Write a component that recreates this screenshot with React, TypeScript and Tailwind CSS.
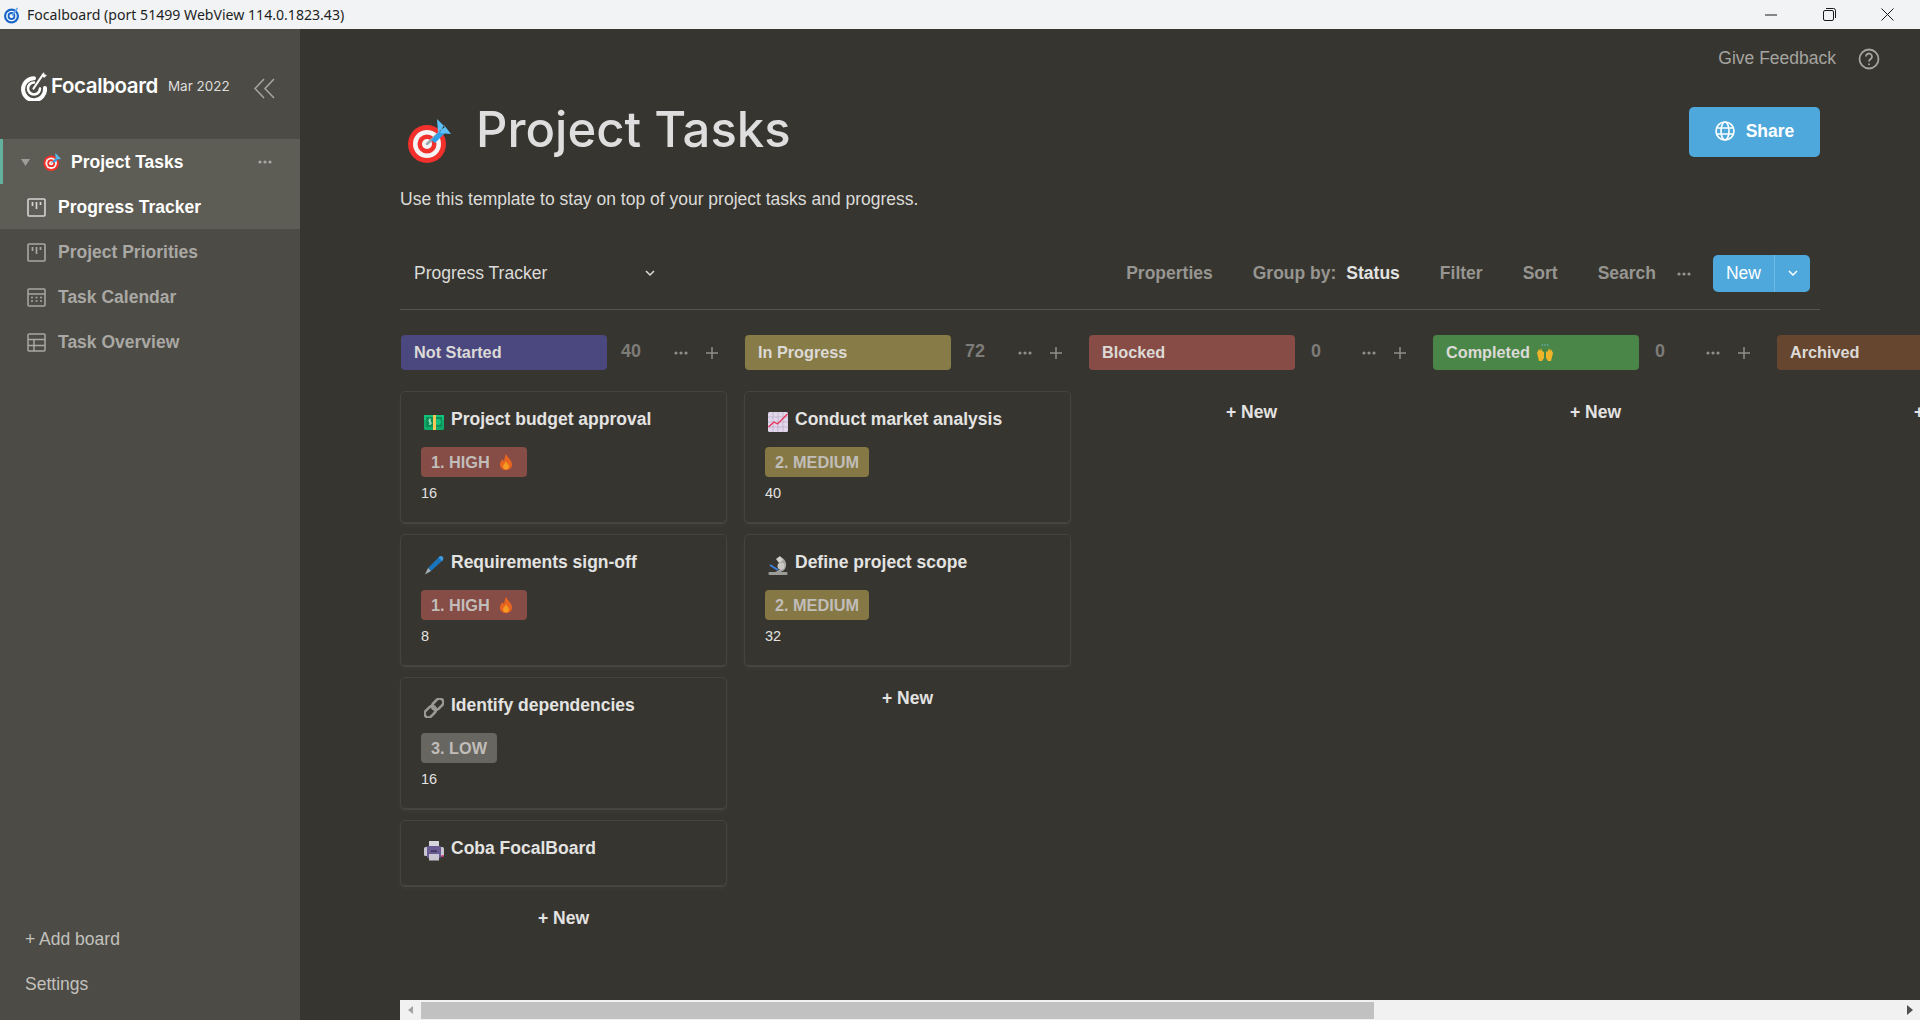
import React from 'react';

const sans = "font-['Liberation_Sans',Arial,sans-serif]";

function DartEmoji({ size = 44 }: { size?: number }) {
  return (
    <svg width={size} height={size} viewBox="0 0 44 44" className="shrink-0">
      <circle cx="20" cy="25" r="19" fill="#f2312c" />
      <circle cx="20" cy="25" r="14" fill="#f4f4f4" />
      <circle cx="20" cy="25" r="9.5" fill="#f2312c" />
      <circle cx="20" cy="25" r="5" fill="#f4f4f4" />
      <path d="M20 25 L33 13" stroke="#9aa5ad" strokeWidth="2.5" strokeLinecap="round" />
      <path d="M24 21 L35 10 L38 14 L28 24 Z" fill="#2f9fe8" />
      <path d="M31 13 L30 0 L38 8 Z M33 14 L44 15 L37 6 Z" fill="#5cc0f7" />
    </svg>
  );
}

function MoneyEmoji() {
  return (
    <svg width="20" height="20" viewBox="0 0 20 20" className="shrink-0">
      <rect x="0" y="3" width="20" height="15" rx="1.5" fill="#0fa968" />
      <rect x="0" y="3" width="20" height="5" fill="#13c27a" />
      <rect x="2" y="5" width="16" height="10" fill="#0b8f58" />
      <circle cx="14" cy="10" r="3" fill="#13c27a" />
      <path d="M6 7.5 C4.5 7.5 4.5 9.8 6 9.8 C7.5 9.8 7.5 12.5 5.5 12.2 M6 6.5 V13" stroke="#b8f5d4" strokeWidth="1" fill="none" />
      <rect x="9" y="3" width="3" height="15" fill="#f5c65a" />
    </svg>
  );
}

function PenEmoji() {
  return (
    <svg width="20" height="20" viewBox="0 0 20 20" className="shrink-0">
      <path d="M4 13 L15 2 Q17 1 18.5 2.5 Q20 4 18 6 L7 16 Z" fill="#1b75bb" />
      <path d="M14.5 2.5 L18 6 L19 5 Q20 3 18.5 1.5 Q17 0.5 15.5 1.5 Z" fill="#3f9be0" />
      <path d="M4 13 L7 16 L1 19.5 Z" fill="#a8b0b5" />
    </svg>
  );
}

function LinkEmoji() {
  return (
    <svg width="20" height="20" viewBox="0 0 20 20" fill="none" className="shrink-0" stroke="#9b9a96" strokeWidth="2.6">
      <rect x="-6.5" y="-3.8" width="13" height="7.6" rx="3.8" transform="translate(6.3 13.7) rotate(-45)" />
      <rect x="-6.5" y="-3.8" width="13" height="7.6" rx="3.8" transform="translate(13.7 6.3) rotate(-45)" />
    </svg>
  );
}

function PrinterEmoji() {
  return (
    <svg width="20" height="20" viewBox="0 0 20 20" className="shrink-0">
      <rect x="5" y="0" width="10" height="6" fill="#d5d3dc" />
      <rect x="0" y="6" width="20" height="9" rx="1.5" fill="#c8c6d0" />
      <rect x="3" y="5" width="14" height="12" rx="1" fill="#6b5b95" />
      <rect x="7" y="9.5" width="6" height="1.2" fill="#2e2845" />
      <rect x="5" y="13" width="10" height="6.5" fill="#c9c7d2" />
      <rect x="17.5" y="14" width="2" height="2" fill="#e83e8c" />
    </svg>
  );
}

function ChartEmoji() {
  return (
    <svg width="20" height="20" viewBox="0 0 20 20" className="shrink-0">
      <rect x="0" y="0" width="20" height="20" rx="1.5" fill="#e2d7ea" />
      <path d="M5 0V20M10 0V20M15 0V20M0 5H20M0 10H20M0 15H20" stroke="#b9a9c6" strokeWidth="0.7" />
      <path d="M0.5 15 L6 10 L9.5 12 L19.5 2" stroke="#e8335a" strokeWidth="1.4" fill="none" />
    </svg>
  );
}

function MicroscopeEmoji() {
  return (
    <svg width="20" height="20" viewBox="0 0 20 20" className="shrink-0">
      <rect x="0.5" y="17" width="19" height="3" rx="1" fill="#9c9b97" />
      <path d="M12 2 C17 3 20 9 17 14 Q15 17 12 17 L7 17 Q13 15 13.5 11 Q13.5 8 11 7 Z" fill="#a5a4a0" />
      <path d="M8 4 L12 1 L15 5 L11 8 Z" fill="#d3d2ce" />
      <circle cx="13" cy="11" r="3.5" fill="#c9c8c4" />
      <path d="M2 10 L10 15" stroke="#3f84e5" strokeWidth="1.6" />
    </svg>
  );
}

function FlameEmoji() {
  return (
    <svg width="14" height="16" viewBox="0 0 14 16" className="shrink-0">
      <path d="M7 0 C8 3 13 6 13 10.5 C13 14 10.2 16 7 16 C3.8 16 1 14 1 10.5 C1 8 2.5 6.5 3.5 5 C4 6.5 4.5 7 5 7 C5.8 5 5.5 2.5 7 0 Z" fill="#e8651f" />
      <path d="M7 7.5 C8 9.5 10 10.5 10 12.5 C10 14.5 8.5 15.5 7 15.5 C5.5 15.5 4 14.5 4 12.5 C4 10.5 6 9.5 7 7.5 Z" fill="#f59a23" />
    </svg>
  );
}

function HandsEmoji() {
  return (
    <svg width="18" height="18" viewBox="0 0 18 18" className="shrink-0">
      <path d="M1 9 L3 5 L4 7 L5 4 L6 7 L8 8 L8 14 L6 17 L3 17 L2 13 Z" fill="#f0b429" />
      <path d="M17 9 L15 5 L14 7 L13 4 L12 7 L10 8 L10 14 L12 17 L15 17 L16 13 Z" fill="#f0b429" />
      <path d="M6 2 L6.5 0 M9 2 V0 M12 2 L11.5 0" stroke="#6fb7c9" strokeWidth="0.8" />
    </svg>
  );
}

function BoardIcon({ className }: { className: string }) {
  return (
    <svg width="19" height="19" viewBox="0 0 19 19" fill="none" stroke="currentColor" className={className}>
      <rect x="1" y="1" width="17" height="17" rx="1" strokeWidth="1.6" />
      <path d="M5.5 4v4M9.5 4v7M13.5 4v3" strokeWidth="1.7" />
    </svg>
  );
}

function CalendarIcon({ className }: { className: string }) {
  return (
    <svg width="19" height="19" viewBox="0 0 19 19" fill="none" stroke="currentColor" className={className}>
      <rect x="1" y="1" width="17" height="17" rx="1" strokeWidth="1.5" />
      <path d="M1 6h17" strokeWidth="1.5" />
      <path d="M4 9.5h2M8.5 9.5h2M13 9.5h2M4 13h2M8.5 13h2M13 13h2" strokeWidth="1.3" />
    </svg>
  );
}

function TableIcon({ className }: { className: string }) {
  return (
    <svg width="19" height="19" viewBox="0 0 19 19" fill="none" stroke="currentColor" className={className}>
      <rect x="1" y="1" width="17" height="17" rx="1" strokeWidth="1.5" />
      <path d="M1 6.5h17M1 12.5h17M7 6.5v11.5" strokeWidth="1.5" />
    </svg>
  );
}

function Logo() {
  return (
    <svg width="26" height="29" viewBox="0 0 26 29" fill="none" className="shrink-0">
      <path d="M13 6.2 A11 11 0 1 0 24 16" stroke="#fff" strokeWidth="4" strokeLinecap="round" />
      <path d="M13 10.5 A6 6 0 1 0 19 16.5" stroke="#fff" strokeWidth="2.6" strokeLinecap="round" />
      <path d="M12.5 16.5 L22 2.5" stroke="#fff" strokeWidth="2.2" strokeLinecap="round" />
      <path d="M21 3 L23 0 L23.5 2.5 L26 3 L23 6 Z" fill="#fff" />
    </svg>
  );
}

function Dots({ className }: { className: string }) {
  return (
    <svg width="14" height="4" viewBox="0 0 14 4" fill="currentColor" className={className}>
      <circle cx="2" cy="2" r="1.6" />
      <circle cx="7" cy="2" r="1.6" />
      <circle cx="12" cy="2" r="1.6" />
    </svg>
  );
}

function Chevron({ className }: { className: string }) {
  return (
    <svg width="10" height="7" viewBox="0 0 10 7" fill="none" stroke="currentColor" strokeWidth="1.5" className={className}>
      <path d="M1 1l4 4 4-4" />
    </svg>
  );
}

function TitleBar() {
  return (
    <div className="h-[29px] shrink-0 bg-[#f1f3f4] flex items-center text-[#1f1f1f]">
      <svg width="16" height="18" viewBox="0 0 16 18" fill="none" className="ml-[4px] shrink-0">
        <circle cx="7.5" cy="10" r="7.5" fill="#1b66c9" />
        <circle cx="7.5" cy="10" r="4.6" stroke="#fff" strokeWidth="1.4" />
        <circle cx="7.5" cy="10" r="2" fill="#fff" />
        <path d="M8 9.5L13.5 2" stroke="#6aa9f0" strokeWidth="1.6" />
      </svg>
      <span className="ml-[7px] font-['Noto_Sans',sans-serif] text-[14.1px]">Focalboard (port 51499 WebView 114.0.1823.43)</span>
      <div className="ml-auto flex items-center mr-[4px]">
        <div className="w-[58px] h-[29px] flex items-center justify-center">
          <svg width="12" height="2" viewBox="0 0 12 2"><path d="M0 1h12" stroke="#1a1a1a" /></svg>
        </div>
        <div className="w-[58px] h-[29px] flex items-center justify-center">
          <svg width="13" height="13" viewBox="0 0 13 13" fill="none" stroke="#1a1a1a">
            <rect x="0.5" y="2.5" width="10" height="10" rx="1.5" />
            <path d="M3 0.5h7.5a2 2 0 0 1 2 2V10" />
          </svg>
        </div>
        <div className="w-[58px] h-[29px] flex items-center justify-center">
          <svg width="13" height="13" viewBox="0 0 13 13" stroke="#1a1a1a"><path d="M0.5 0.5l12 12M12.5 0.5l-12 12" /></svg>
        </div>
      </div>
    </div>
  );
}

const views = [
  { name: 'Project Priorities', Icon: BoardIcon },
  { name: 'Task Calendar', Icon: CalendarIcon },
  { name: 'Task Overview', Icon: TableIcon },
];

function Sidebar() {
  return (
    <aside className="w-[300px] shrink-0 bg-[#4c4b45] flex flex-col">
      <div className="h-[110px] pl-[21px] flex items-center pt-[5px]">
        <Logo />
        <span className="ml-[4px] font-['Inter',sans-serif] font-semibold text-[20.5px] text-white tracking-[-0.4px]">Focalboard</span>
        <span className="ml-[10px] font-['Inter',sans-serif] text-[13.5px] text-[#dedddb]">Mar 2022</span>
        <svg width="21" height="21" viewBox="0 0 21 21" fill="none" stroke="#a5a4a0" strokeWidth="1.6" className="ml-auto mr-[25px] translate-y-[2px]">
          <path d="M10 1L1 10.5L10 20M20 1L11 10.5L20 20" />
        </svg>
      </div>
      <div className="h-[45px] bg-[#5d5c55] border-l-[3px] border-[#64b09e] flex items-center pl-[18px] pr-[28px] pt-[1px]">
        <svg width="9" height="7" viewBox="0 0 9 7" className="shrink-0"><path d="M0 0h9L4.5 7z" fill="#9e9d98" /></svg>
        <span className="ml-[13px] w-[18px] h-[18px] shrink-0"><DartEmoji size={18} /></span>
        <span className="ml-[10px] text-[17.5px] font-bold text-white">Project Tasks</span>
        <Dots className="ml-auto text-[#a9a8a4]" />
      </div>
      <div className="h-[45px] bg-[#5d5c55] flex items-center pl-[27px] pt-[1px] text-white">
        <BoardIcon className="text-[#d5d4d1] shrink-0" />
        <span className="ml-[12px] text-[17.5px] font-bold">Progress Tracker</span>
      </div>
      {views.map(({ name, Icon }) => (
        <div key={name} className="h-[45px] flex items-center pl-[27px] pt-[1px] text-[#a9a8a4]">
          <Icon className="shrink-0" />
          <span className="ml-[12px] text-[17.5px] font-bold">{name}</span>
        </div>
      ))}
      <div className="mt-auto pb-[13px] text-[17.5px] text-[#c2c1be]">
        <div className="h-[45px] flex items-center pl-[25px]">+ Add board</div>
        <div className="h-[45px] flex items-center pl-[25px]">Settings</div>
      </div>
    </aside>
  );
}

function Toolbar() {
  const item = 'text-[17.5px] font-bold text-[#969591]';
  return (
    <div className="mt-[46px] h-[37px] flex items-center">
      <span className="ml-[14px] text-[17.5px] text-[#dcdcda]">Progress Tracker</span>
      <Chevron className="ml-[98px] text-[#dcdcda]" />
      <div className="ml-auto flex items-center pr-[10px]">
        <span className={item}>Properties</span>
        <span className={`${item} ml-[40px]`}>Group by:</span>
        <span className="ml-[10px] text-[17.5px] font-bold text-[#e3e3e2]">Status</span>
        <span className={`${item} ml-[40px]`}>Filter</span>
        <span className={`${item} ml-[40px]`}>Sort</span>
        <span className={`${item} ml-[40px]`}>Search</span>
        <Dots className="ml-[21px] text-[#969591]" />
        <div className="ml-[22px] w-[97px] h-[37px] rounded-[5px] bg-[#4ea8dc] flex text-white">
          <span className="w-[62px] flex items-center justify-center text-[17.5px] border-r border-[#6fb8e3]">New</span>
          <span className="flex-1 flex items-center justify-center"><Chevron className="" /></span>
        </div>
      </div>
    </div>
  );
}

type Card = {
  title: string;
  icon: React.ReactNode;
  priority?: 'high' | 'medium' | 'low';
  estimate?: string;
};

const priorities = {
  high: { label: '1. HIGH', chip: 'bg-[#864c46] pl-[10px] pr-[14px] gap-[9px]', flame: true },
  medium: { label: '2. MEDIUM', chip: 'bg-[#857845] px-[10px]', flame: false },
  low: { label: '3. LOW', chip: 'bg-[#676661] px-[10px]', flame: false },
};

const columns: { name: string; tag: string; count: string; hands?: boolean; cards: Card[] }[] = [
  {
    name: 'Not Started',
    tag: 'bg-[#4b4880]',
    count: '40',
    cards: [
      { title: 'Project budget approval', icon: <MoneyEmoji />, priority: 'high', estimate: '16' },
      { title: 'Requirements sign-off', icon: <PenEmoji />, priority: 'high', estimate: '8' },
      { title: 'Identify dependencies', icon: <LinkEmoji />, priority: 'low', estimate: '16' },
      { title: 'Coba FocalBoard', icon: <PrinterEmoji /> },
    ],
  },
  {
    name: 'In Progress',
    tag: 'bg-[#877b47]',
    count: '72',
    cards: [
      { title: 'Conduct market analysis', icon: <ChartEmoji />, priority: 'medium', estimate: '40' },
      { title: 'Define project scope', icon: <MicroscopeEmoji />, priority: 'medium', estimate: '32' },
    ],
  },
  { name: 'Blocked', tag: 'bg-[#884c46]', count: '0', cards: [] },
  { name: 'Completed', tag: 'bg-[#498647]', count: '0', hands: true, cards: [] },
  { name: 'Archived', tag: 'bg-[#66462f]', count: '0', cards: [] },
];

function BoardCard({ card }: { card: Card }) {
  const p = card.priority ? priorities[card.priority] : null;
  return (
    <div className={`w-[327px] rounded-[5px] border border-[#45443f] shadow-[0_1px_0_rgba(255,255,255,0.07),0_3px_5px_rgba(255,255,255,0.03)] pl-[20px] pt-[15px] ${p ? 'pb-[20px]' : 'pb-[25px]'}`}>
      <div className="flex items-center h-[24px] pl-[3px]">
        <span className="w-[27px] shrink-0 translate-y-[3px]">{card.icon}</span>
        <span className="text-[17.5px] font-bold text-[#e3e3e2] whitespace-nowrap">{card.title}</span>
      </div>
      {p && (
        <>
          <div className={`mt-[16px] inline-flex h-[30px] items-center rounded-[4px] text-[16.25px] font-bold text-[#c1bdb9] ${p.chip}`}>
            {p.label}
            {p.flame && <FlameEmoji />}
          </div>
          <div className="mt-[7px] h-[18px] text-[14.5px] leading-[18px] text-[#e3e3e2]">{card.estimate}</div>
        </>
      )}
    </div>
  );
}

function Column({ col }: { col: (typeof columns)[number] }) {
  return (
    <div className="w-[327px] shrink-0">
      <div className="h-[35px] flex items-center pl-[1px]">
        <div className={`w-[206px] h-[35px] flex items-center gap-[6px] rounded-[4px] pl-[13px] text-[16.25px] font-bold text-[#dcdad6] ${col.tag}`}>
          {col.name}
          {col.hands && <HandsEmoji />}
        </div>
        <span className={`ml-[14px] w-[53px] -translate-y-[1px] text-[18px] font-bold text-[#7d7c78] ${col.count.length === 1 ? 'pl-[2px]' : ''}`}>{col.count}</span>
        <Dots className="text-[#8e8d89]" />
        <svg width="12" height="12" viewBox="0 0 12 12" stroke="#8e8d89" strokeWidth="1.5" className="ml-[18px]"><path d="M6 0v12M0 6h12" /></svg>
      </div>
      <div className="mt-[21px] flex flex-col gap-[11px]">
        {col.cards.map((c) => <BoardCard key={c.title} card={c} />)}
      </div>
      <div className={`${col.cards.length ? 'mt-[20px]' : 'mt-[9px]'} h-[24px] flex items-center justify-center text-[17.5px] font-bold text-[#e3e3e2] whitespace-nowrap`}>+ New</div>
    </div>
  );
}

function Scrollbar() {
  return (
    <div className="ml-[100px] h-[20px] shrink-0 bg-[#f1f1f1] flex items-center justify-between pr-[7px]">
      <div className="flex items-center">
        <svg width="21" height="20" viewBox="0 0 21 20" className="shrink-0"><path d="M13 6v8l-5-4z" fill="#a3a3a3" /></svg>
        <div className="w-[953px] h-[17px] bg-[#c1c1c1]" />
      </div>
      <svg width="6" height="10" viewBox="0 0 6 10" className="shrink-0"><path d="M0 0v10l6-5z" fill="#505050" /></svg>
    </div>
  );
}

export default function App() {
  return (
    <div className={`h-[1020px] w-[1920px] flex flex-col overflow-hidden ${sans}`}>
      <TitleBar />
      <div className="flex-1 flex min-h-0">
        <Sidebar />
        <main className="flex-1 min-w-0 bg-[#37352f] flex flex-col">
          <div className="flex-1 min-h-0 overflow-hidden">
            <div className="h-[30px] mt-[15px] flex items-center justify-end pr-[40px]">
              <span className="text-[17.5px] text-[#a5a4a0] pb-[2px]">Give Feedback</span>
              <svg width="22" height="22" viewBox="0 0 22 22" fill="none" stroke="#a5a4a0" strokeWidth="1.8" className="ml-[22px]">
                <circle cx="11" cy="11" r="9.5" />
                <path d="M8 8.5a3 3 0 1 1 4.5 2.6c-1 .6-1.5 1.2-1.5 2.4M11 15.5v1.5" />
              </svg>
            </div>
            <div className="ml-[100px] mr-[100px]">
              <div className="mt-[33px] h-[50px] flex items-center">
                <span className="ml-[7px] translate-y-[9px]"><DartEmoji /></span>
                <h1 className="ml-[25px] font-['Inter',sans-serif] font-medium text-[49px] text-[#dedede] leading-none -translate-y-[3px]">Project Tasks</h1>
                <button className="ml-auto w-[131px] h-[50px] rounded-[5px] bg-[#4ea8dc] text-white flex items-center justify-center gap-[11px] text-[17.5px] font-bold pb-[2px]">
                  <svg width="20" height="20" viewBox="0 0 20 20" fill="none" stroke="#fff" strokeWidth="1.6">
                    <circle cx="10" cy="10" r="9" />
                    <ellipse cx="10" cy="10" rx="4" ry="9" />
                    <path d="M1.5 7h17M1.5 13h17" />
                  </svg>
                  Share
                </button>
              </div>
              <p className="mt-[32px] text-[17.5px] leading-[20px] text-[#dcdcda]">Use this template to stay on top of your project tasks and progress.</p>
              <Toolbar />
              <div className="mt-[17px] h-px bg-[#55544f]" />
            </div>
            <div className="ml-[100px] mt-[25px] flex gap-[17px] w-[1800px]">
              {columns.map((col) => <Column key={col.name} col={col} />)}
            </div>
          </div>
          <Scrollbar />
        </main>
      </div>
    </div>
  );
}
